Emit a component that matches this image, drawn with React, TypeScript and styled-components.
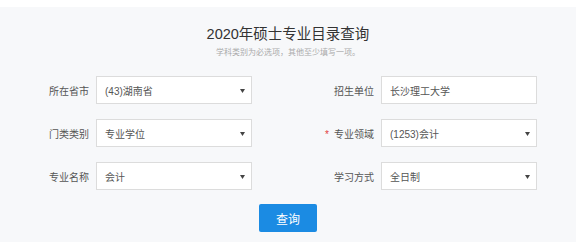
import React from "react";
import styled, { createGlobalStyle } from "styled-components";

const Global = createGlobalStyle`
  html, body { margin: 0; padding: 0; background: #ffffff; }
  body { font-family: "Liberation Sans", "Noto Sans CJK SC", sans-serif; }
  * { box-sizing: border-box; }
`;

const Panel = styled.div`
  margin-top: 7px;
  height: 235px;
  background: #f7f8fa;
  padding-top: 18px;
  display: flex;
  flex-direction: column;
  align-items: center;
`;

const Title = styled.h1`
  margin: 0;
  font-size: 14.5px;
  line-height: 18px;
  font-weight: normal;
  color: #333333;
`;

const Subtitle = styled.p`
  margin: 4px 0 0;
  font-size: 8px;
  line-height: 12px;
  color: #aaaaaa;
`;

const Form = styled.div`
  margin-top: 17px;
  display: grid;
  grid-template-columns: repeat(2, 285px);
  row-gap: 15px;
`;

const Field = styled.div`
  display: flex;
  align-items: center;
  height: 28px;
`;

const Label = styled.label`
  width: 93px;
  padding-right: 7px;
  text-align: right;
  font-size: 10px;
  color: #555555;
  white-space: nowrap;
`;

const Star = styled.span`
  color: #e23c3c;
  margin-right: 5px;
  font-size: 10px;
`;

const Box = styled.div`
  position: relative;
  width: 156px;
  height: 28px;
  background: #ffffff;
  border: 1px solid #dcdcdc;
  display: flex;
  align-items: center;
  padding-left: 8px;
  font-size: 10px;
  color: #555555;
`;

const TextInput = styled.input`
  width: 156px;
  height: 28px;
  background: #ffffff;
  border: 1px solid #dcdcdc;
  padding: 0 8px;
  font-family: inherit;
  font-size: 10px;
  color: #555555;
  outline: none;
`;

const Caret = styled.svg`
  position: absolute;
  right: 6px;
  top: 12px;
`;

const Button = styled.button`
  margin-top: 14px;
  width: 58px;
  height: 28px;
  border: none;
  border-radius: 2px;
  background: #1b8be3;
  color: #ffffff;
  font-family: inherit;
  font-size: 12px;
  cursor: pointer;
`;

const Select: React.FC<{ value: string }> = ({ value }) => (
  <Box>
    {value}
    <Caret width="5" height="4" viewBox="0 0 5 4">
      <path d="M0 0 H5 L2.5 4 Z" fill="#444" />
    </Caret>
  </Box>
);

export default function App() {
  return (
    <>
      <Global />
      <Panel>
        <Title>2020年硕士专业目录查询</Title>
        <Subtitle>学科类别为必选项，其他至少填写一项。</Subtitle>
        <Form>
          <Field>
            <Label>所在省市</Label>
            <Select value="(43)湖南省" />
          </Field>
          <Field>
            <Label>招生单位</Label>
            <TextInput defaultValue="长沙理工大学" />
          </Field>
          <Field>
            <Label>门类类别</Label>
            <Select value="专业学位" />
          </Field>
          <Field>
            <Label>
              <Star>*</Star>专业领域
            </Label>
            <Select value="(1253)会计" />
          </Field>
          <Field>
            <Label>专业名称</Label>
            <Select value="会计" />
          </Field>
          <Field>
            <Label>学习方式</Label>
            <Select value="全日制" />
          </Field>
        </Form>
        <Button>查询</Button>
      </Panel>
    </>
  );
}
